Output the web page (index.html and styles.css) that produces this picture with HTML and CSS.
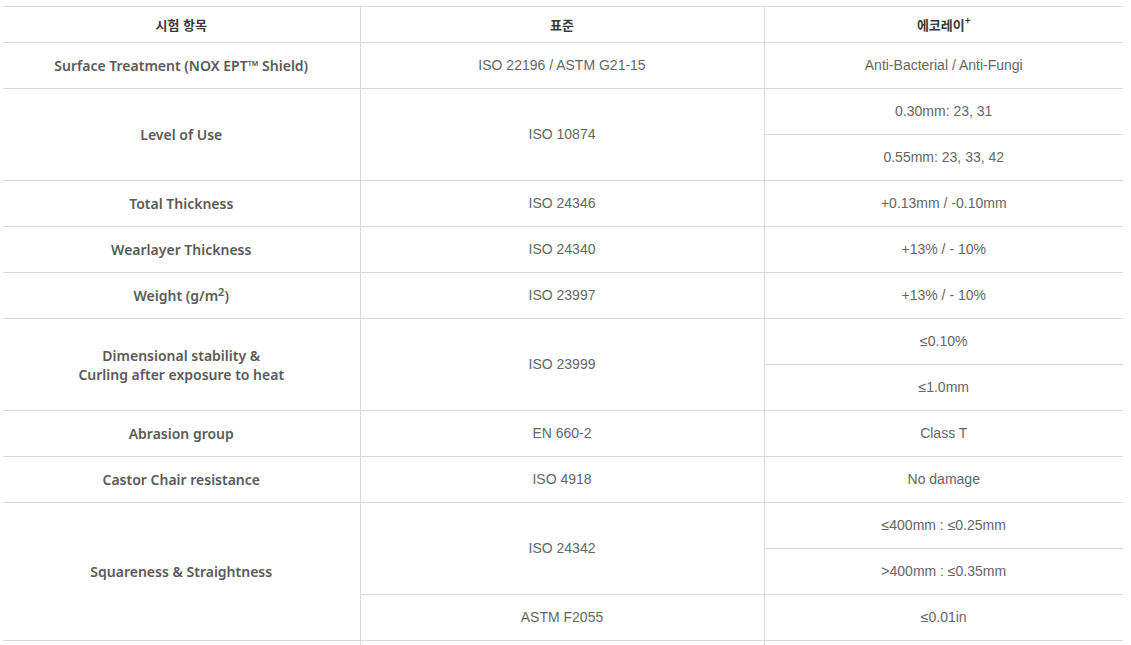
FILE: index.html
```html
<!DOCTYPE html>
<html lang="ko">
<head>
<meta charset="utf-8">
<link rel="stylesheet" href="styles.css">
</head>
<body>
<div class="wrap">
<table class="spec">
  <colgroup><col class="c1"><col class="c2"><col class="c3"></colgroup>
  <thead>
    <tr><th>시험 항목</th><th>표준</th><th>에코레이<sup>+</sup></th></tr>
  </thead>
  <tbody>
    <tr><td class="item">Surface Treatment (NOX EPT™ Shield)</td><td>ISO 22196 / ASTM G21-15</td><td>Anti-Bacterial / Anti-Fungi</td></tr>
    <tr><td class="item" rowspan="2">Level of Use</td><td rowspan="2">ISO 10874</td><td>0.30mm: 23, 31</td></tr>
    <tr><td>0.55mm: 23, 33, 42</td></tr>
    <tr><td class="item">Total Thickness</td><td>ISO 24346</td><td>+0.13mm / -0.10mm</td></tr>
    <tr><td class="item">Wearlayer Thickness</td><td>ISO 24340</td><td>+13% / - 10%</td></tr>
    <tr><td class="item">Weight (g/m<sup>2</sup>)</td><td>ISO 23997</td><td>+13% / - 10%</td></tr>
    <tr><td class="item" rowspan="2">Dimensional stability &amp;<br>Curling after exposure to heat</td><td rowspan="2">ISO 23999</td><td>≤0.10%</td></tr>
    <tr><td>≤1.0mm</td></tr>
    <tr><td class="item">Abrasion group</td><td>EN 660-2</td><td>Class T</td></tr>
    <tr><td class="item">Castor Chair resistance</td><td>ISO 4918</td><td>No damage</td></tr>
    <tr><td class="item" rowspan="3">Squareness &amp; Straightness</td><td rowspan="2">ISO 24342</td><td>≤400mm : ≤0.25mm</td></tr>
    <tr><td>&gt;400mm : ≤0.35mm</td></tr>
    <tr><td>ASTM F2055</td><td>≤0.01in</td></tr>
    <tr><td class="item"></td><td></td><td></td></tr>
  </tbody>
</table>
</div>
</body>
</html>
```
FILE: styles.css
```css
html, body {
  margin: 0;
  padding: 0;
  background: #fff;
}
.wrap {
  padding: 6px 8px 0 3px;
}
.spec {
  width: 1120px;
  border-collapse: collapse;
  table-layout: fixed;
  font-family: "Liberation Sans", Arial, sans-serif;
  font-size: 14px;
  color: #666;
}
.c1 { width: 357px; }
.c2 { width: 404px; }
.c3 { width: 359px; }
.spec th, .spec td {
  border-top: 1px solid #dadada;
  border-bottom: 1px solid #dadada;
  border-left: 1px solid #dadada;
  text-align: center;
  vertical-align: middle;
  padding: 0;
}
.spec th:first-child, .spec td.item {
  border-left: none;
}
.spec th {
  height: 35px;
  font-family: "Noto Sans CJK KR", "Noto Sans", sans-serif;
  font-weight: 700;
  font-size: 13px;
  color: #3a3a3a;
}
.spec td {
  height: 45px;
  line-height: 19px;
}
.spec td.item {
  font-family: "Noto Sans", "Open Sans", sans-serif;
  font-weight: 600;
  color: #5a5a5a;
  font-size: 14px;
}
sup {
  font-size: 10px;
  line-height: 0;
  vertical-align: 6px;
}
.item sup {
  font-size: 11px;
  vertical-align: 5px;
}
```
